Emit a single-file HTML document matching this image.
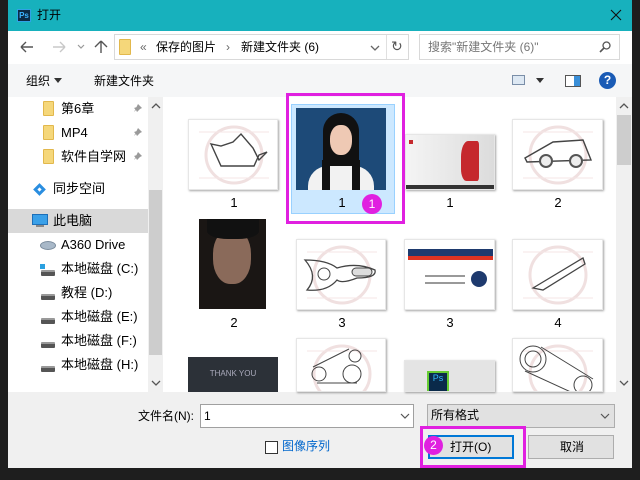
<!DOCTYPE html>
<html><head><meta charset="utf-8"><style>
*{margin:0;padding:0;box-sizing:border-box}
body{width:640px;height:480px;background:#1e1e1e;position:relative;overflow:hidden;font-family:"Liberation Sans","Noto Sans CJK SC",sans-serif;font-size:12px;color:#000}
.a{position:absolute}
.t{position:absolute;white-space:nowrap;line-height:14px}
.thumb{position:absolute;background:#fff;box-shadow:1px 1px 2px rgba(0,0,0,.35);border:1px solid #e6e6e6;overflow:hidden}
.lbl{position:absolute;font-size:13px;width:30px;text-align:center}
.fold{position:absolute;width:11px;height:15px;background:#f5d77a;border:1px solid #e2b84c;border-radius:1px}
.drv{position:absolute;width:14px;height:6px;background:#555;border-radius:1px;border-top:2px solid #999}
.pin{position:absolute}
</style></head><body>
<div class="a" style="left:8px;top:0;width:624px;height:468px;background:#f0f0f0"></div>
<!-- title -->
<div class="a" style="left:8px;top:0;width:624px;height:31px;background:#17b1bd"></div>
<div class="a" style="left:17px;top:9px;width:14px;height:13px;background:#0c2a45;border:1px solid #2fa3e6;color:#3db4ff;font-size:8px;line-height:11px;text-align:center;font-weight:bold">Ps</div>
<div class="t" style="left:37px;top:8px;font-size:12px;color:#000">打开</div>
<svg class="a" style="left:610px;top:9px" width="12" height="12"><path d="M1 1L11 11M11 1L1 11" stroke="#111" stroke-width="1.1"/></svg>
<!-- nav bar -->
<div class="a" style="left:8px;top:31px;width:624px;height:33px;background:#fff"></div>
<svg class="a" style="left:20px;top:40px" width="100" height="14">
<path d="M1 7H13M1 7L6 2M1 7L6 12" stroke="#555" stroke-width="1.4" fill="none"/>
<path d="M33 7H45M45 7L40 2M45 7L40 12" stroke="#c8c8c8" stroke-width="1.4" fill="none"/>
<path d="M58 5L61 8L64 5" stroke="#999" stroke-width="1.2" fill="none"/>
<path d="M81 13V1M81 1L75 7M81 1L87 7" stroke="#555" stroke-width="1.4" fill="none"/>
</svg>
<div class="a" style="left:114px;top:34px;width:295px;height:26px;border:1px solid #d9d9d9;background:#fff"></div>
<div class="fold" style="left:119px;top:39px;width:12px;height:16px"></div>
<div class="t" style="left:140px;top:40px;color:#666">«</div>
<div class="t" style="left:156px;top:40px">保存的图片</div>
<div class="t" style="left:226px;top:40px;color:#666">›</div>
<div class="t" style="left:241px;top:40px">新建文件夹 (6)</div>
<svg class="a" style="left:370px;top:44px" width="10" height="8"><path d="M1 2L5 6L9 2" stroke="#666" stroke-width="1.3" fill="none"/></svg>
<div class="a" style="left:386px;top:35px;width:1px;height:24px;background:#e0e0e0"></div>
<div class="t" style="left:391px;top:39px;color:#555;font-size:14px">↻</div>
<div class="a" style="left:419px;top:34px;width:201px;height:26px;border:1px solid #d9d9d9;background:#fff"></div>
<div class="t" style="left:428px;top:40px;color:#777">搜索"新建文件夹 (6)"</div>
<svg class="a" style="left:599px;top:41px" width="12" height="12"><circle cx="7.5" cy="4.5" r="3.5" stroke="#555" stroke-width="1.3" fill="none"/><path d="M5 7L1 11" stroke="#555" stroke-width="1.6"/></svg>
<!-- toolbar -->
<div class="a" style="left:8px;top:64px;width:624px;height:33px;background:#f5f6f7"></div>
<div class="t" style="left:26px;top:74px">组织</div>
<svg class="a" style="left:54px;top:78px" width="8" height="5"><path d="M0 0H8L4 5Z" fill="#333"/></svg>
<div class="t" style="left:94px;top:74px">新建文件夹</div>
<div class="a" style="left:512px;top:75px;width:13px;height:10px;border:1px solid #7a8ea8;background:#dde8f3"></div>
<svg class="a" style="left:536px;top:78px" width="8" height="5"><path d="M0 0H8L4 5Z" fill="#333"/></svg>
<div class="a" style="left:565px;top:75px;width:16px;height:12px;border:1px solid #555;background:#fff"></div>
<div class="a" style="left:574px;top:76px;width:6px;height:10px;background:#3a8fd8"></div>
<div class="a" style="left:599px;top:72px;width:17px;height:17px;border-radius:50%;background:#1a5bb5;color:#fff;font-weight:bold;font-size:12px;text-align:center;line-height:17px">?</div>
<!-- left nav -->
<div class="a" style="left:8px;top:97px;width:140px;height:295px;background:#fff"></div>
<div class="a" style="left:148px;top:97px;width:15px;height:295px;background:#f0f0f0"></div>
<div class="a" style="left:149px;top:190px;width:13px;height:165px;background:#cdcdcd"></div>
<svg class="a" style="left:151px;top:103px" width="10" height="6"><path d="M1 5L5 1L9 5" stroke="#555" stroke-width="1.3" fill="none"/></svg>
<svg class="a" style="left:151px;top:380px" width="10" height="6"><path d="M1 1L5 5L9 1" stroke="#555" stroke-width="1.3" fill="none"/></svg>
<div class="fold" style="left:43px;top:101px"></div><div class="t" style="left:61px;top:102px;font-size:13px">第6章</div>
<div class="fold" style="left:43px;top:125px"></div><div class="t" style="left:61px;top:126px;font-size:13px">MP4</div>
<div class="fold" style="left:43px;top:149px"></div><div class="t" style="left:61px;top:150px;font-size:13px">软件自学网</div>
<svg class="pin" style="left:133px;top:103px" width="10" height="10"><path d="M5 1L9 5L7 6L4 9L3 7L1 9M3 7L1 5L4 4Z" fill="#9a9a9a"/></svg>
<svg class="pin" style="left:133px;top:127px" width="10" height="10"><path d="M5 1L9 5L7 6L4 9L3 7L1 9M3 7L1 5L4 4Z" fill="#9a9a9a"/></svg>
<svg class="pin" style="left:133px;top:151px" width="10" height="10"><path d="M5 1L9 5L7 6L4 9L3 7L1 9M3 7L1 5L4 4Z" fill="#9a9a9a"/></svg>
<div class="a" style="left:35px;top:185px;width:9px;height:9px;border:3px solid #2a8ee0;transform:rotate(45deg)"></div>
<div class="t" style="left:53px;top:182px;font-size:13px">同步空间</div>
<div class="a" style="left:8px;top:209px;width:140px;height:24px;background:#d9d9d9"></div>
<div class="a" style="left:32px;top:214px;width:16px;height:11px;background:#3aa0e8;border:1px solid #1d6fb8"></div>
<div class="a" style="left:36px;top:225px;width:8px;height:2px;background:#888"></div>
<div class="t" style="left:53px;top:214px;font-size:13px">此电脑</div>
<div class="a" style="left:40px;top:241px;width:16px;height:9px;border-radius:50%;background:#a8b8c8;border:1px solid #7a8b9c"></div>
<div class="t" style="left:61px;top:238px;font-size:13px">A360 Drive</div>
<div class="a" style="left:40px;top:264px;width:5px;height:5px;background:#2aa0e0"></div>
<div class="drv" style="left:41px;top:270px"></div><div class="t" style="left:61px;top:262px;font-size:13px">本地磁盘 (C:)</div>
<div class="drv" style="left:41px;top:294px"></div><div class="t" style="left:61px;top:286px;font-size:13px">教程 (D:)</div>
<div class="drv" style="left:41px;top:318px"></div><div class="t" style="left:61px;top:310px;font-size:13px">本地磁盘 (E:)</div>
<div class="drv" style="left:41px;top:342px"></div><div class="t" style="left:61px;top:334px;font-size:13px">本地磁盘 (F:)</div>
<div class="drv" style="left:41px;top:366px"></div><div class="t" style="left:61px;top:358px;font-size:13px">本地磁盘 (H:)</div>
<!-- main pane -->
<div class="a" style="left:163px;top:97px;width:453px;height:295px;background:#fff;overflow:hidden"></div>
<div class="a" style="left:616px;top:97px;width:16px;height:295px;background:#f0f0f0"></div>
<div class="a" style="left:617px;top:115px;width:14px;height:50px;background:#cdcdcd"></div>
<svg class="a" style="left:619px;top:103px" width="10" height="6"><path d="M1 5L5 1L9 5" stroke="#555" stroke-width="1.3" fill="none"/></svg>
<svg class="a" style="left:619px;top:380px" width="10" height="6"><path d="M1 1L5 5L9 1" stroke="#555" stroke-width="1.3" fill="none"/></svg>
<!-- selection -->
<div class="a" style="left:291px;top:104px;width:104px;height:110px;background:#cce8ff;border:1px solid #99d1ff"></div>
<div class="a" style="left:296px;top:108px;width:90px;height:82px;background:#1d4a78;overflow:hidden">
 <div class="a" style="left:27px;top:5px;width:36px;height:80px;background:#111;border-radius:18px 18px 2px 2px"></div>
 <div class="a" style="left:12px;top:58px;width:66px;height:30px;background:#f2f2f2;border-radius:20px 20px 0 0"></div>
 <div class="a" style="left:26px;top:52px;width:8px;height:30px;background:#111"></div>
 <div class="a" style="left:56px;top:52px;width:8px;height:30px;background:#111"></div>
 <div class="a" style="left:34px;top:17px;width:22px;height:30px;background:#efc9b4;border-radius:45%"></div>
</div>
<div class="lbl" style="left:327px;top:195px">1</div>
<!-- sketch thumbs -->
<svg width="0" height="0" style="position:absolute"><defs>
<g id="sk"><circle cx="45" cy="35" r="28" stroke="#f0e0e0" stroke-width="3" fill="none"/><path d="M10 12H80M10 58H80" stroke="#f5e6e6" stroke-width="1"/></g>
</defs></svg>
<div class="thumb" style="left:188px;top:119px;width:90px;height:71px"><svg width="90" height="71"><use href="#sk"/><path d="M22 24L32 46H65L70 35L78 32L70 40L64 28L52 14L44 22L32 26Z" stroke="#444" stroke-width="1.4" fill="none"/></svg></div>
<div class="lbl" style="left:219px;top:195px">1</div>
<div class="thumb" style="left:405px;top:134px;width:90px;height:56px;background:linear-gradient(90deg,#f4f4f4,#dcdcdc)"><div class="a" style="left:55px;top:6px;width:18px;height:40px;background:#c5282d;border-radius:40% 10% 10% 30%"></div><div class="a" style="left:3px;top:5px;width:4px;height:4px;background:#c5282d"></div><div class="a" style="left:0;top:50px;width:90px;height:5px;background:#333"></div></div>
<div class="lbl" style="left:435px;top:195px">1</div>
<div class="thumb" style="left:512px;top:119px;width:91px;height:71px"><svg width="91" height="71"><use href="#sk"/><path d="M12 38L40 22L70 20L78 40L14 42Z" stroke="#444" stroke-width="1.4" fill="none"/><circle cx="33" cy="41" r="6" stroke="#555" stroke-width="2" fill="#eee"/><circle cx="63" cy="41" r="6" stroke="#555" stroke-width="2" fill="#eee"/></svg></div>
<div class="lbl" style="left:543px;top:195px">2</div>
<!-- row2 -->
<div class="a" style="left:199px;top:219px;width:67px;height:90px;background:#1a1614;overflow:hidden"><div class="a" style="left:14px;top:10px;width:38px;height:55px;background:#8a6a5a;border-radius:45%"></div><div class="a" style="left:8px;top:0;width:52px;height:20px;background:#111;border-radius:0 0 40% 40%"></div></div>
<div class="lbl" style="left:219px;top:315px">2</div>
<div class="thumb" style="left:296px;top:239px;width:90px;height:71px"><svg width="90" height="71"><use href="#sk"/><path d="M8 20Q30 20 40 28Q60 22 78 30Q80 38 60 38Q45 44 40 40Q30 52 10 50Q22 36 8 20Z" stroke="#444" stroke-width="1.3" fill="none"/><circle cx="27" cy="34" r="6" stroke="#444" fill="none"/><rect x="55" y="28" width="20" height="8" rx="4" stroke="#444" fill="#ddd"/></svg></div>
<div class="lbl" style="left:327px;top:315px">3</div>
<div class="thumb" style="left:404px;top:239px;width:91px;height:71px"><div class="a" style="left:3px;top:9px;width:85px;height:8px;background:#1e3a6e"></div><div class="a" style="left:3px;top:16px;width:85px;height:4px;background:#d32"></div><div class="a" style="left:66px;top:31px;width:16px;height:16px;border-radius:50%;background:#1e3a6e"></div><div class="a" style="left:20px;top:35px;width:40px;height:2px;background:#999"></div><div class="a" style="left:20px;top:42px;width:40px;height:2px;background:#999"></div></div>
<div class="lbl" style="left:435px;top:315px">3</div>
<div class="thumb" style="left:512px;top:239px;width:91px;height:71px"><svg width="91" height="71"><use href="#sk"/><path d="M20 48L70 18L72 24L30 50Z" stroke="#444" stroke-width="1.3" fill="none"/></svg></div>
<div class="lbl" style="left:543px;top:315px">4</div>
<!-- row3 -->
<div class="a" style="left:188px;top:357px;width:90px;height:35px;background:#2c3138;color:#aab;font-size:8px;text-align:center;line-height:34px">THANK YOU</div>
<div class="thumb" style="left:296px;top:338px;width:90px;height:54px"><svg width="90" height="54"><use href="#sk"/><circle cx="22" cy="35" r="7" stroke="#444" fill="none"/><circle cx="55" cy="35" r="9" stroke="#444" fill="none"/><circle cx="58" cy="17" r="6" stroke="#444" fill="none"/><path d="M16 28L52 10M20 44L60 44" stroke="#444" fill="none"/></svg></div>
<div class="thumb" style="left:404px;top:360px;width:91px;height:32px;background:#e4e4e4"><div class="a" style="left:22px;top:10px;width:22px;height:22px;background:#0a2a4a;border:2px solid #6c3;color:#3bf;font-size:9px;text-align:center">Ps</div></div>
<div class="thumb" style="left:512px;top:338px;width:91px;height:54px"><svg width="91" height="54"><use href="#sk"/><circle cx="20" cy="20" r="13" stroke="#444" fill="none"/><circle cx="20" cy="20" r="8" stroke="#444" fill="none"/><circle cx="70" cy="46" r="9" stroke="#444" fill="none"/><path d="M28 8L80 40M12 32L60 54" stroke="#444" fill="none"/></svg></div>
<!-- magenta box 1 -->
<div class="a" style="left:286px;top:93px;width:119px;height:131px;border:3px solid #e020e0"></div>
<div class="a" style="left:362px;top:194px;width:20px;height:20px;border-radius:50%;background:#e020e0;color:#fff;font-size:12px;text-align:center;line-height:20px">1</div>
<!-- bottom -->
<div class="t" style="left:138px;top:409px">文件名(N):</div>
<div class="a" style="left:200px;top:404px;width:214px;height:24px;border:1px solid #a0a0a0;background:#fff"></div>
<div class="t" style="left:204px;top:409px">1</div>
<svg class="a" style="left:400px;top:413px" width="10" height="6"><path d="M1 1L5 5L9 1" stroke="#555" stroke-width="1.2" fill="none"/></svg>
<div class="a" style="left:427px;top:404px;width:188px;height:24px;border:1px solid #adadad;background:#e1e1e1"></div>
<div class="t" style="left:431px;top:408px">所有格式</div>
<svg class="a" style="left:600px;top:413px" width="10" height="6"><path d="M1 1L5 5L9 1" stroke="#555" stroke-width="1.2" fill="none"/></svg>
<div class="a" style="left:265px;top:441px;width:13px;height:13px;border:1px solid #333;background:#fff"></div>
<div class="t" style="left:282px;top:439px;color:#0066cc">图像序列</div>
<div class="a" style="left:428px;top:435px;width:86px;height:24px;border:2px solid #0078d7;background:#e1e1e1"></div>
<div class="t" style="left:450px;top:440px">打开(O)</div>
<div class="a" style="left:528px;top:435px;width:86px;height:24px;border:1px solid #adadad;background:#e1e1e1"></div>
<div class="t" style="left:560px;top:440px">取消</div>
<div class="a" style="left:420px;top:426px;width:106px;height:42px;border:3px solid #e020e0"></div>
<div class="a" style="left:424px;top:436px;width:19px;height:19px;border-radius:50%;background:#e020e0;color:#fff;font-size:12px;text-align:center;line-height:19px">2</div>
</body></html>
